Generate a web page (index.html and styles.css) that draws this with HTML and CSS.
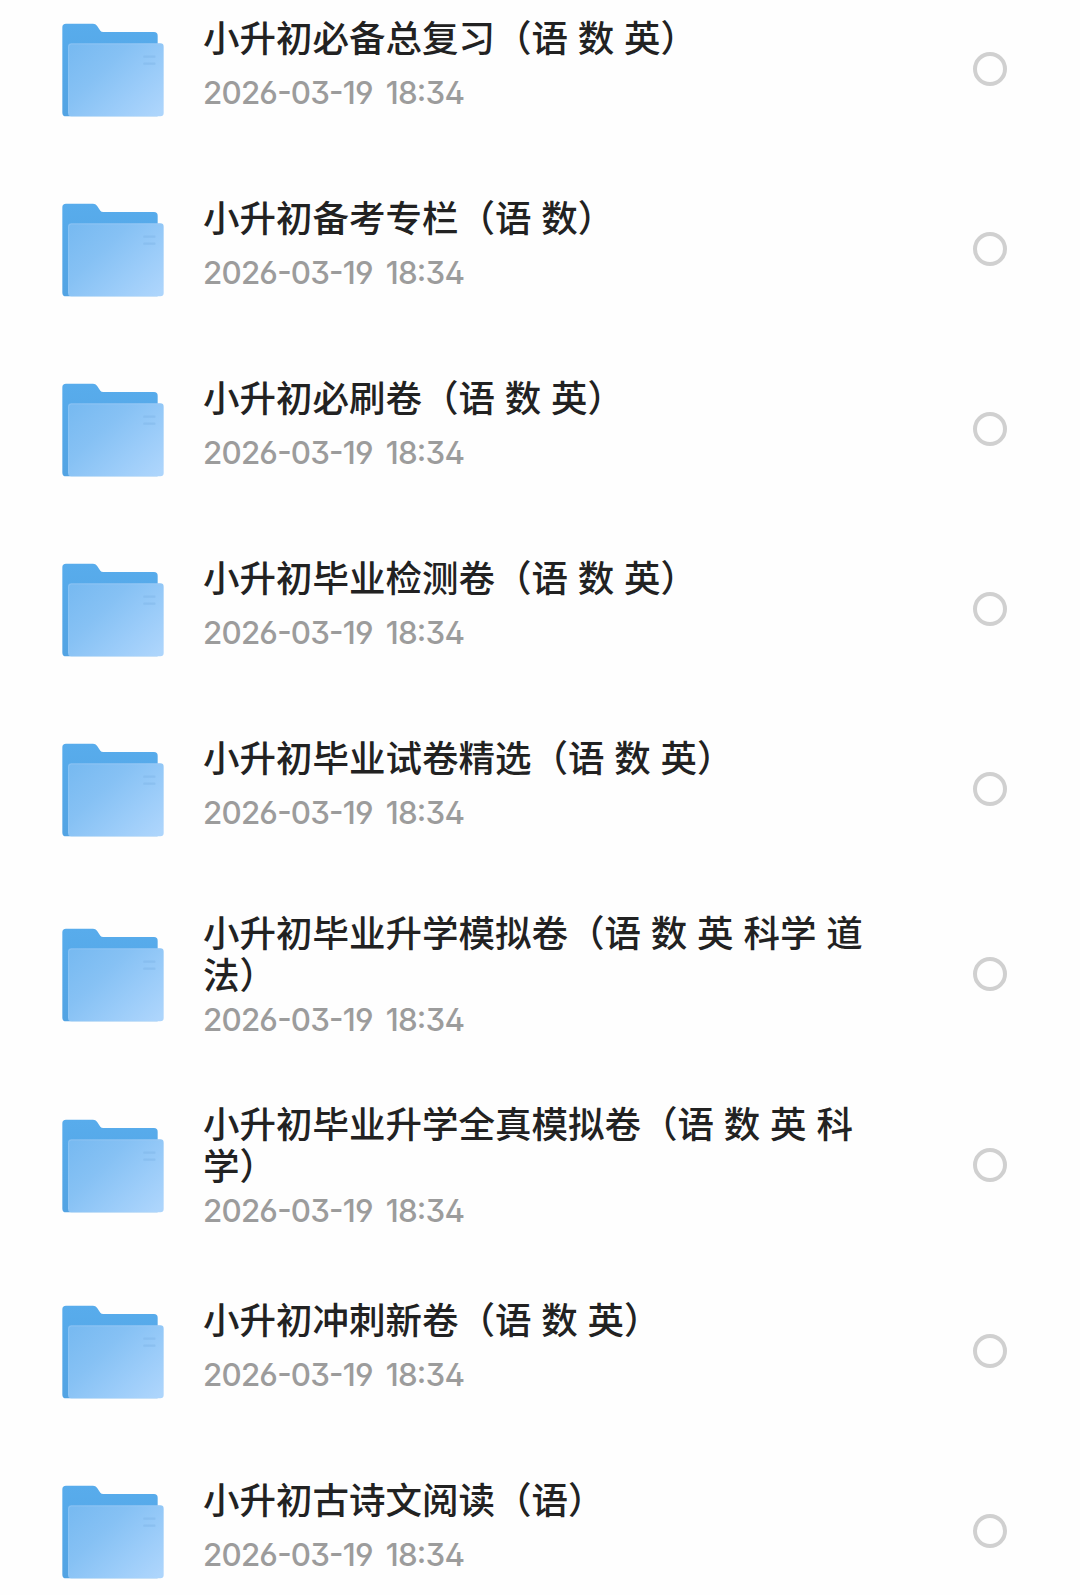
FILE: index.html
```
<!DOCTYPE html>
<html lang="zh-CN">

<head>
    <meta charset="UTF-8">
    <meta name="viewport" content="width=device-width, initial-scale=1.0">
    <title>文件列表</title>
    <link rel="stylesheet" href="styles.css">
</head>

<body>
    <!-- 文件夹图标，所有行共用 -->
    <svg class="defs" width="0" height="0">
        <defs>
            <linearGradient id="back" x1="0" y1="0" x2="0" y2="1">
                <stop offset="0" stop-color="#58acec" />
                <stop offset="1" stop-color="#52a3e3" />
            </linearGradient>
            <linearGradient id="front" x1="0" y1="0.1" x2="1" y2="0.9">
                <stop offset="0" stop-color="#78baf1" />
                <stop offset="0.35" stop-color="#86c1f4" />
                <stop offset="0.7" stop-color="#9bccf9" />
                <stop offset="1" stop-color="#add5fc" />
            </linearGradient>
            <symbol id="folder" viewBox="0 0 306 282">
                <path d="M12 2H93Q101 2 105 8L115 23Q118 27 124 27H276Q287 27 287 38V280H12Q1 280 1 269V13Q1 2 12 2Z" fill="url(#back)" />
                <rect x="18" y="61" width="287" height="219" rx="10" fill="url(#front)" />
                <path d="M20 270V71Q20 63 28 63H295" fill="none" stroke="#a4d0f7" stroke-width="3" opacity="0.4" />
                <path d="M247 101H277M247 122H277" stroke="#80b7ea" stroke-width="7" stroke-linecap="round" opacity="0.5" />
            </symbol>
        </defs>
    </svg>

    <ul class="file-list">
        <li class="file">
            <svg class="icon"><use href="#folder" /></svg>
            <div class="info">
                <p class="name">小升初必备总复习（语 数 英）</p>
                <p class="date">2026-03-19 18:34</p>
            </div>
            <span class="check"></span>
        </li>
        <li class="file">
            <svg class="icon"><use href="#folder" /></svg>
            <div class="info">
                <p class="name">小升初备考专栏（语 数）</p>
                <p class="date">2026-03-19 18:34</p>
            </div>
            <span class="check"></span>
        </li>
        <li class="file">
            <svg class="icon"><use href="#folder" /></svg>
            <div class="info">
                <p class="name">小升初必刷卷（语 数 英）</p>
                <p class="date">2026-03-19 18:34</p>
            </div>
            <span class="check"></span>
        </li>
        <li class="file">
            <svg class="icon"><use href="#folder" /></svg>
            <div class="info">
                <p class="name">小升初毕业检测卷（语 数 英）</p>
                <p class="date">2026-03-19 18:34</p>
            </div>
            <span class="check"></span>
        </li>
        <li class="file">
            <svg class="icon"><use href="#folder" /></svg>
            <div class="info">
                <p class="name">小升初毕业试卷精选（语 数 英）</p>
                <p class="date">2026-03-19 18:34</p>
            </div>
            <span class="check"></span>
        </li>
        <li class="file two-line">
            <svg class="icon"><use href="#folder" /></svg>
            <div class="info">
                <p class="name">小升初毕业升学模拟卷（语 数 英 科学 道法）</p>
                <p class="date">2026-03-19 18:34</p>
            </div>
            <span class="check"></span>
        </li>
        <li class="file two-line">
            <svg class="icon"><use href="#folder" /></svg>
            <div class="info">
                <p class="name">小升初毕业升学全真模拟卷（语 数 英 科学）</p>
                <p class="date">2026-03-19 18:34</p>
            </div>
            <span class="check"></span>
        </li>
        <li class="file">
            <svg class="icon"><use href="#folder" /></svg>
            <div class="info">
                <p class="name">小升初冲刺新卷（语 数 英）</p>
                <p class="date">2026-03-19 18:34</p>
            </div>
            <span class="check"></span>
        </li>
        <li class="file">
            <svg class="icon"><use href="#folder" /></svg>
            <div class="info">
                <p class="name">小升初古诗文阅读（语）</p>
                <p class="date">2026-03-19 18:34</p>
            </div>
            <span class="check"></span>
        </li>
    </ul>
</body>

</html>
```
FILE: styles.css
```
* {
    margin: 0;
    padding: 0;
    box-sizing: border-box;
}

html,
body {
    height: 100%;
    overflow: hidden;
}

body {
    background: #fefefe;
    font-family: "Noto Sans CJK SC", sans-serif;
}

.defs {
    display: block;
}

/* 列表已滚动，第一行上边缘在屏幕外 */
.file-list {
    list-style: none;
    margin-top: -20.5px;
}

.file {
    display: flex;
    align-items: center;
    height: 180px;
    padding: 0 73px 0 61.5px;
}

.two-line {
    height: 191px;
}

.icon {
    flex: none;
    width: 102px;
    height: 94px;
    margin-right: 39.5px;
}

.info {
    width: 676px;
    padding-bottom: 11.5px;
}

.name {
    color: #222;
    font-size: 36.5px;
    font-weight: 500;
    line-height: 42px;
    word-spacing: 1.6px;
}

.date {
    margin-top: 17px;
    color: #9c9c9c;
    font-family: Inter, "Noto Sans CJK SC", sans-serif;
    font-size: 31.3px;
    font-weight: 500;
    line-height: 36px;
    letter-spacing: -0.8px;
    word-spacing: 5.5px;
    font-feature-settings: "case", "ss01";
}

.two-line .info {
    padding-bottom: 2px;
}

.two-line .date {
    margin-top: 7px;
}

.check {
    flex: none;
    width: 34px;
    height: 34px;
    margin-left: auto;
    margin-bottom: 2px;
    border: 4px solid #d0d0d0;
    border-radius: 50%;
}
```
